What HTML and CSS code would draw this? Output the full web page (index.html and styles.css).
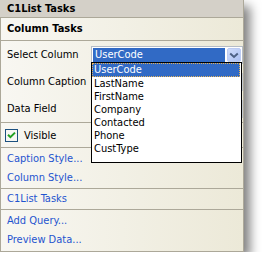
FILE: index.html
```html
<!DOCTYPE html>
<html>
<head>
<meta charset="utf-8">
<link rel="stylesheet" href="styles.css">
</head>
<body>
<div class="panel">
  <div class="title">C1List Tasks</div>
  <div class="section-head">Column Tasks</div>
  <div class="sep"></div>
  <div class="fields">
    <div class="row">
      <span class="label">Select Column</span>
      <div class="combo">
        <span class="combo-text">UserCode</span>
        <span class="combo-btn">
          <svg width="14" height="14" viewBox="0 0 14 14">
            <defs>
              <linearGradient id="bg" x1="0" y1="0" x2="1" y2="1">
                <stop offset="0" stop-color="#d2defb"/>
                <stop offset="1" stop-color="#a9bff3"/>
              </linearGradient>
            </defs>
            <rect x="0.5" y="0.5" width="13" height="13" rx="1.5" fill="url(#bg)" stroke="#bccbf2"/>
            <path d="M3.2 5.6 L7 9 L10.8 5.6" fill="none" stroke="#4d6185" stroke-width="2"/>
          </svg>
        </span>
      </div>
    </div>
    <div class="row">
      <span class="label">Column Caption</span>
      <div class="textbox"></div>
    </div>
    <div class="row">
      <span class="label">Data Field</span>
      <div class="textbox"></div>
    </div>
  </div>
  <div class="sep"></div>
  <div class="check-row">
    <svg class="checkbox" width="13" height="13" viewBox="0 0 13 13">
      <rect x="0.5" y="0.5" width="12" height="12" fill="#f7f7f3" stroke="#1c5180"/>
      <path d="M3 5.8 L5.4 8.2 L10 3.6" fill="none" stroke="#21a121" stroke-width="2"/>
    </svg>
    <span>Visible</span>
  </div>
  <div class="sep"></div>
  <div class="links">
    <a class="link">Caption Style...</a>
    <a class="link">Column Style...</a>
  </div>
  <div class="sep"></div>
  <div class="links single">
    <a class="link">C1List Tasks</a>
  </div>
  <div class="sep"></div>
  <div class="links last">
    <a class="link">Add Query...</a>
    <a class="link">Preview Data...</a>
  </div>

  <ul class="dropdown">
    <li class="item selected">UserCode</li>
    <li class="item">LastName</li>
    <li class="item">FirstName</li>
    <li class="item">Company</li>
    <li class="item">Contacted</li>
    <li class="item">Phone</li>
    <li class="item">CustType</li>
  </ul>
</div>
</body>
</html>
```

FILE: styles.css
```css
html, body {
  margin: 0;
  padding: 0;
  background: #ffffff;
}

body {
  font-family: "DejaVu Sans Condensed", "DejaVu Sans", sans-serif;
  font-size: 11px;
  color: #000;
}

.panel {
  position: relative;
  width: 242px;
  border-left: 1px solid #aca899;
  border-right: 1px solid #aca899;
  border-bottom: 1px solid #aca899;
  background: linear-gradient(to right, #f8f7f2, #ece9d8);
  box-shadow: 6px 6px 10px rgba(0, 0, 0, 0.5);
}

.title {
  height: 17px;
  line-height: 17px;
  background: #d4d0c8;
  border-bottom: 1px solid #aca899;
  font-weight: bold;
  margin-left: -1px;
  padding-left: 7px;
}

.section-head {
  height: 22px;
  line-height: 22px;
  padding-left: 6px;
  font-weight: bold;
}

.sep {
  height: 1px;
  background: #aca899;
}

.fields {
  display: flex;
  flex-direction: column;
}

.row {
  height: 27px;
  display: grid;
  grid-template-columns: 90px 152px;
  align-items: center;
}

.label {
  padding-left: 6px;
}

.combo {
  height: 18px;
  box-sizing: border-box;
  border: 1px solid #b5bcc6;
  background: #fff;
  padding: 1px;
  display: flex;
  gap: 2px;
}

.combo-text {
  flex: 1;
  background: #316ac5;
  color: #fff;
  line-height: 14px;
  padding-left: 2px;
}

.combo-btn {
  width: 14px;
  display: flex;
}

.textbox {
  height: 18px;
  box-sizing: border-box;
  border: 1px solid #c4c9cf;
  background: #fff;
}

.check-row {
  height: 24px;
  display: flex;
  align-items: center;
  padding-left: 4px;
  gap: 6px;
}

.links {
  padding: 1px 0;
  display: flex;
  flex-direction: column;
}

.links.single {
  padding: 0;
}

.links.single .link {
  height: 20px;
  line-height: 20px;
}

.links.last {
  padding: 1px 0 2px;
}

.link {
  height: 19px;
  line-height: 19px;
  padding-left: 6px;
  color: #1f54cf;
}

.dropdown {
  position: absolute;
  left: 90px;
  top: 62px;
  width: 149px;
  height: 99px;
  margin: 0;
  padding: 0;
  list-style: none;
  border: 1px solid #000;
  background: #fff;
}

.item {
  height: 13px;
  line-height: 13px;
  padding-left: 2px;
}

.item.selected {
  box-sizing: border-box;
  height: 14px;
  line-height: 12px;
  margin-right: 1px;
  background: #316ac5;
  color: #fff;
  border: 1px dotted #e2b25a;
  padding-left: 1px;
}
```
